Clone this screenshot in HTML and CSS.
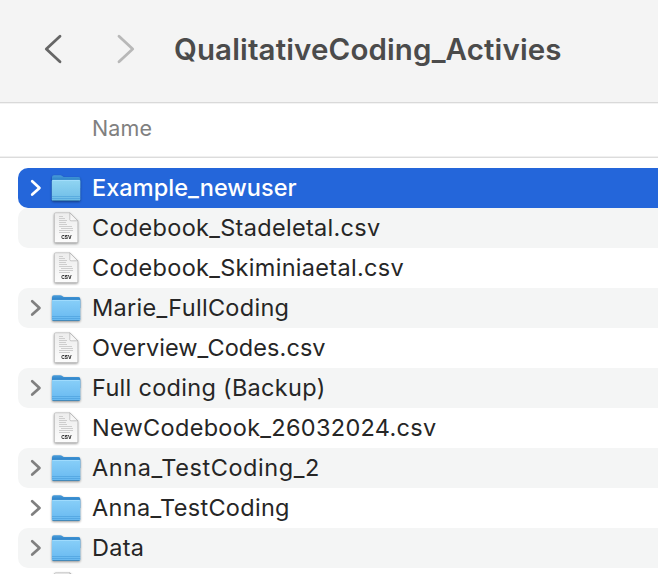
FILE: index.html
```html
<!DOCTYPE html>
<html lang="en">
<head>
<meta charset="utf-8">
<title>QualitativeCoding_Activies</title>
<link rel="stylesheet" href="styles.css">
</head>
<body>
<svg class="defs" aria-hidden="true">
  <defs>
    <linearGradient id="front" x1="0" y1="0" x2="0" y2="1"><stop offset="0" stop-color="#88cff8"/><stop offset="1" stop-color="#67b8f0"/></linearGradient>
    <linearGradient id="back" x1="0" y1="0" x2="0" y2="1"><stop offset="0" stop-color="#4a9ddb"/><stop offset=".3" stop-color="#3287cb"/></linearGradient>
    <linearGradient id="frontSel" x1="0" y1="0" x2="0" y2="1"><stop offset="0" stop-color="#91d5f2"/><stop offset="1" stop-color="#6dbce7"/></linearGradient>
    <linearGradient id="paper" x1="0" y1="0" x2="0" y2="1"><stop offset="0" stop-color="#ededed"/><stop offset="1" stop-color="#fcfcfc"/></linearGradient>
    <linearGradient id="fold" x1="0" y1="1" x2="1" y2="0"><stop offset="0" stop-color="#fff"/><stop offset=".6" stop-color="#eee"/><stop offset="1" stop-color="#c8c8c8"/></linearGradient>
  </defs>
  <symbol id="folder" viewBox="0 0 40 40">
    <path d="M6 9.200q0-2 2-2h6.400q1 0 1.800.7l.8.700q.6.500 1.500.5H32.500q1.800 0 1.800 1.800V20H6z" fill="url(#back)"/>
    <path d="M5.800 12.900q0-1 1-1H33.300q1 0 1 1V31.300q0 1.500-1.500 1.500H7.300q-1.500 0-1.500-1.500z" fill="var(--front)"/>
    <path d="M6.500 12.400h27.100" stroke="#a9dfff" stroke-width=".8"/>
    <path d="M6 28.500h28.200M6 30.500h28.200" stroke="#3f96d4" stroke-width=".8" opacity=".6"/>
    <path d="M6.600 32.500h26.900" stroke="#397fae" stroke-width=".8"/>
  </symbol>
  <symbol id="page" viewBox="0 0 40 40">
    <path d="M9.700 4.800h14.100l8 8V33.600q0 1-1 1H9.400q-1 0-1-1V6.100q0-1.300 1.300-1.300z" fill="url(#paper)" stroke="#b4b4b4" stroke-width=".6"/>
    <path d="M13 8.500h4M13 10.500h6M13 12.500h8M13 14.500h7M13 16.500h8M13 18.500h13M15 20.500h12M13 22.500h14M13 24.500h11" stroke="#c4c4c4" stroke-width=".8"/>
    <path d="M23.800 4.800l8 8h-6.800q-1.200 0-1.200-1.200z" fill="url(#fold)" stroke="#a6a6a6" stroke-width=".6"/>
  </symbol>
  <symbol id="csv" viewBox="0 0 40 40">
    <use href="#page"/>
    <text x="20.400" y="31.200" class="ext" textLength="10.500" lengthAdjust="spacingAndGlyphs">CSV</text>
  </symbol>
  <symbol id="chevron" viewBox="0 0 16 40"><path d="M4.200 13.200l7.300 6.700-7.300 6.700" fill="none" stroke="currentColor" stroke-width="2.700" stroke-linecap="round" stroke-linejoin="round"/></symbol>
</svg>
<header class="toolbar">
  <svg class="nav back" viewBox="0 0 20 32"><path d="M17 3.200L3.300 16 17 28.800"/></svg>
  <svg class="nav forward" viewBox="0 0 20 32"><path d="M3 3.200L16.700 16 3 28.800"/></svg>
  <h1 class="title">QualitativeCoding_Activies</h1>
</header>
<div class="columns">Name</div>
<ul class="files">
  <li class="row selected"><svg class="disc"><use href="#chevron"/></svg><svg class="icon"><use href="#folder"/></svg><span>Example_newuser</span></li>
  <li class="row"><i class="disc"></i><svg class="icon"><use href="#csv"/></svg><span>Codebook_Stadeletal.csv</span></li>
  <li class="row"><i class="disc"></i><svg class="icon"><use href="#csv"/></svg><span>Codebook_Skiminiaetal.csv</span></li>
  <li class="row"><svg class="disc"><use href="#chevron"/></svg><svg class="icon"><use href="#folder"/></svg><span>Marie_FullCoding</span></li>
  <li class="row tight"><i class="disc"></i><svg class="icon"><use href="#csv"/></svg><span>Overview_Codes.csv</span></li>
  <li class="row"><svg class="disc"><use href="#chevron"/></svg><svg class="icon"><use href="#folder"/></svg><span>Full coding (Backup)</span></li>
  <li class="row"><i class="disc"></i><svg class="icon"><use href="#csv"/></svg><span>NewCodebook_26032024.csv</span></li>
  <li class="row loose"><svg class="disc"><use href="#chevron"/></svg><svg class="icon"><use href="#folder"/></svg><span>Anna_TestCoding_2</span></li>
  <li class="row"><svg class="disc"><use href="#chevron"/></svg><svg class="icon"><use href="#folder"/></svg><span>Anna_TestCoding</span></li>
  <li class="row"><svg class="disc"><use href="#chevron"/></svg><svg class="icon"><use href="#folder"/></svg><span>Data</span></li>
  <li class="row"><i class="disc"></i><svg class="icon"><use href="#page"/></svg></li>
</ul>
</body>
</html>
```
FILE: styles.css
```css
* { box-sizing: border-box; }
body {
  display: flex;
  flex-direction: column;
  height: 100vh;
  margin: 0;
  overflow: hidden;
  background: #fff;
  color: #262626;
  font-family: Inter, "Liberation Sans", sans-serif;
}
.defs { display: block; width: 0; height: 0; flex: none; }
.toolbar {
  display: flex;
  flex: none;
  align-items: center;
  height: 103px;
  padding: 0 0 5px 43px;
  background: #f4f4f4;
  border-bottom: 1px solid #d9d9d9;
}
.nav { width: 20px; height: 32px; flex: none; fill: none; stroke-width: 2.8; stroke-linecap: round; stroke-linejoin: round; }
.back { stroke: #666; }
.forward { margin-left: 53px; stroke: #b8b8b8; }
.title {
  margin: 0 0 0 38px;
  font-size: 29.5px;
  line-height: 40px;
  font-weight: 600;
  letter-spacing: 0.13px;
  color: #4b4b4b;
  white-space: nowrap;
}
.columns {
  flex: none;
  height: 55px;
  padding-left: 92px;
  border-top: 1px solid #f3f3f3;
  border-bottom: 1px solid #dcdcdc;
  box-shadow: inset 0 -1px #f0f0f0;
  font-size: 21.5px;
  line-height: 49px;
  letter-spacing: 0.1px;
  color: #808080;
}
.files { list-style: none; flex: 1; min-height: 0; overflow: hidden; margin: 0; padding: 10px 0 0 18px; }
.row {
  --front: url(#front);
  display: flex;
  align-items: center;
  height: 40px;
  padding-left: 10px;
  border-radius: 10px 0 0 10px;
  font-size: 23.5px;
  line-height: 40px;
  letter-spacing: 0.3px;
  white-space: nowrap;
}
.row:nth-child(even) { background: #f4f5f5; }
.row.selected { --front: url(#frontSel); background: #2466da; color: #fff; font-weight: 500; letter-spacing: 0.04px; }
.tight { letter-spacing: 0.07px; }
.loose { letter-spacing: 0.56px; }
.disc { width: 16px; height: 40px; flex: none; color: #808080; }
.selected .disc { color: #fff; }
.icon { width: 40px; height: 40px; flex: none; margin: 0 6px 0 2px; filter: drop-shadow(0 1px 0.8px rgba(0, 0, 0, 0.4)); }
.ext { font: 700 5px Inter, sans-serif; letter-spacing: 0; text-anchor: middle; fill: #111; }
```
